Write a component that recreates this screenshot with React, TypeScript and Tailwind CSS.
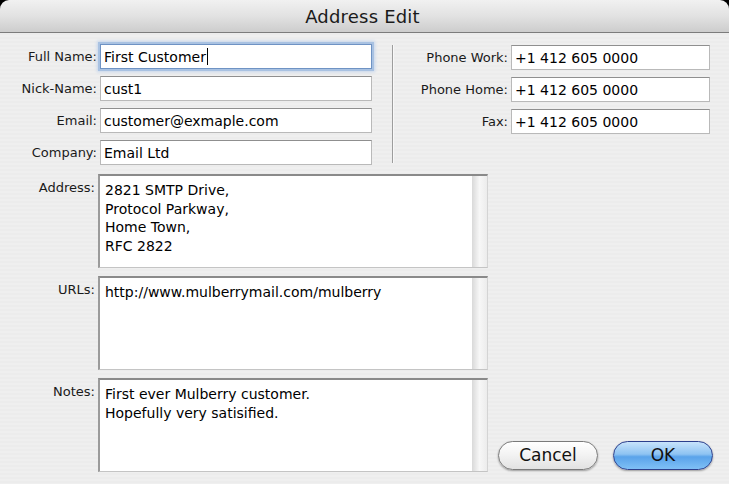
import React from 'react';

const font = { fontFamily: '"DejaVu Sans", "Liberation Sans", sans-serif' };

function Field({ label, value, focused, labelW, inputW }: { label: string; value: string; focused?: boolean; labelW: string; inputW: string }) {
  return (
    <div className="flex items-center h-[25px]">
      <span className={`${labelW} text-right pr-[3px] text-[13px] text-[#1a1a1a] leading-none`}>{label}</span>
      <div
        className={`${inputW} h-[25px] bg-white flex items-center pl-[3px] text-[14px] text-black leading-none border ${
          focused
            ? 'border-[#6f93c4] shadow-[0_0_0_2px_#a9c2e2,0_0_3px_3px_#c5d6ec]'
            : 'border-[#b9b9b9] border-t-[#8f8f8f]'
        }`}
      >
        <span>{value}</span>
        {focused && <span className="w-px h-[17px] bg-black ml-[1px]" />}
      </div>
    </div>
  );
}

function Area({ label, lines }: { label: string; lines: string[] }) {
  return (
    <div className="flex">
      <span className="w-[95px] text-right pr-[3px] pt-[5px] text-[13px] text-[#1a1a1a] leading-[18px]">{label}</span>
      <div className="w-[390px] h-[94px] flex bg-white border-t-2 border-l-2 border-t-[#8a8a8a] border-l-[#9b9b9b] border-r border-b border-r-[#d4d4d4] border-b-[#c4c4c4]">
        <div className="flex-1 pl-[5px] pt-[5px] text-[14px] leading-[18.5px] text-black">
          {lines.map((l, i) => (
            <div key={i}>{l}</div>
          ))}
        </div>
        <div className="w-[15px] h-full bg-gradient-to-r from-[#d9d9d9] via-[#f7f7f7] to-[#ececec]" />
      </div>
    </div>
  );
}

export default function App() {
  return (
    <div className="w-[729px] h-[489px] bg-white" style={font}>
      <div className="h-[484px] bg-[#ececec] flex flex-col">
        {/* title bar */}
        <div className="bg-gradient-to-r from-[#000] via-[#ececec] to-[#000]">
          <div className="h-[33px] rounded-t-[9px] bg-gradient-to-b from-[#f1f1f1] via-[#e2e2e2] to-[#cdcdcd] border-b border-[#7c7c7c] flex items-center justify-center">
            <span className="text-[18px] text-[#1a1a1a] tracking-[0.2px] pr-[4px]">Address Edit</span>
          </div>
        </div>

        <div className="flex-1 bg-[repeating-linear-gradient(180deg,#ececec_0px,#ececec_2px,#efefef_2px,#efefef_4px)] flex flex-col pt-[11px]">
          {/* top fields */}
          <div className="flex">
            <div className="flex flex-col gap-[7px]">
              <Field label="Full Name:" value="First Customer" focused labelW="w-[100px]" inputW="w-[272px]" />
              <Field label="Nick-Name:" value="cust1" labelW="w-[100px]" inputW="w-[272px]" />
              <Field label="Email:" value="customer@exmaple.com" labelW="w-[100px]" inputW="w-[272px]" />
              <Field label="Company:" value="Email Ltd" labelW="w-[100px]" inputW="w-[272px]" />
            </div>
            <div className="ml-[20px] mt-[1px] w-px h-[118px] bg-[#9d9d9d] shadow-[1px_0_0_#f8f8f8]" />
            <div className="flex flex-col gap-[7px] mt-[1px]">
              <Field label="Phone Work:" value="+1 412 605 0000" labelW="w-[118px]" inputW="w-[199px]" />
              <Field label="Phone Home:" value="+1 412 605 0000" labelW="w-[118px]" inputW="w-[199px]" />
              <Field label="Fax:" value="+1 412 605 0000" labelW="w-[118px]" inputW="w-[199px]" />
            </div>
          </div>

          {/* text areas + buttons */}
          <div className="flex mt-[9px]">
            <div className="flex flex-col gap-[8px] ml-[3px]">
              <Area label="Address:" lines={['2821 SMTP Drive,', 'Protocol Parkway,', 'Home Town,', 'RFC 2822']} />
              <Area label="URLs:" lines={['http://www.mulberrymail.com/mulberry']} />
              <Area label="Notes:" lines={['First ever Mulberry customer.', 'Hopefully very satisified.']} />
            </div>
            <div className="flex-1 flex items-end justify-end gap-[15px] pr-[16px] pb-[2px]">
              <button className="w-[100px] h-[29px] rounded-full border border-[#7a7a7a] bg-gradient-to-b from-[#ffffff] via-[#f2f2f2] to-[#e2e2e2] shadow-[0_1px_2px_rgba(0,0,0,0.35)] text-[17px] text-[#111] leading-none">
                Cancel
              </button>
              <button className="w-[100px] h-[29px] rounded-full border border-[#2c3f8c] bg-[linear-gradient(180deg,#c7e3fb_0%,#8ec3f2_45%,#5aa3ea_55%,#7fc0f6_100%)] shadow-[0_1px_2px_rgba(0,0,0,0.35)] text-[17px] text-[#111] leading-none">
                OK
              </button>
            </div>
          </div>
        </div>
      </div>
    </div>
  );
}
